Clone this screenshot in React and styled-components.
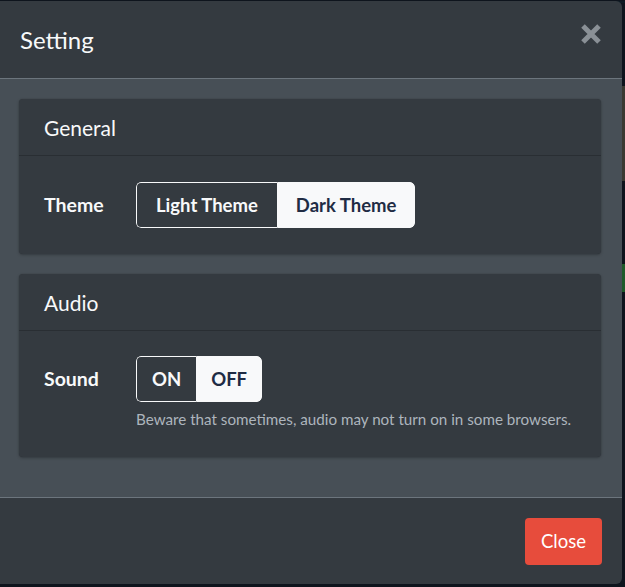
import React, { useState } from "react";
import styled, { createGlobalStyle } from "styled-components";

const GlobalStyle = createGlobalStyle`
  html, body { margin: 0; padding: 0; }
  body {
    background: #0e141d;
    font-family: Lato, "Noto Sans", "Liberation Sans", sans-serif;
    color: #f8f9fa;
    overflow: hidden;
  }
`;

const Backdrop = styled.div`
  position: relative;
  width: 625px;
  height: 587px;
  background: #0e141d;
`;

const Decor = styled.div`
  position: absolute;
  right: 0;
  width: 4px;
  top: ${(p) => p.$top}px;
  height: ${(p) => p.$h}px;
  background: ${(p) => p.$c};
`;

const TopStrip = styled.div`
  position: absolute;
  left: 0;
  top: 0;
  width: 625px;
  height: 2px;
  background: linear-gradient(90deg, #1c3a44, #12323c 40%, #0e1a24);
`;

const Modal = styled.div`
  position: relative;
  margin-top: 1px;
  width: 622px;
  height: 583px;
  background: #343a40;
  border-radius: 0 6px 6px 0;
  display: flex;
  flex-direction: column;
  overflow: hidden;
`;

const Header = styled.div`
  height: 78px;
  flex: none;
  box-sizing: border-box;
  display: flex;
  align-items: center;
  justify-content: space-between;
  padding: 0 19px 0 20px;
  border-bottom: 1px solid #6c757d;
`;

const Title = styled.h4`
  margin: 0;
  font-size: 24px;
  font-weight: 400;
  color: #f8f9fa;
`;

const CloseX = styled.button`
  background: none;
  border: 0;
  padding: 0;
  width: 24px;
  height: 24px;
  margin-top: -11px;
  display: flex;
  align-items: center;
  justify-content: center;
  cursor: pointer;
`;

const Body = styled.div`
  flex: 1;
  background: #474f56;
  padding: 20px 21px 0 19px;
  border-bottom: 1px solid #6c757d;
`;

const Card = styled.div`
  background: #343a40;
  border-radius: 4px;
  box-shadow: 0 0 1px rgba(0, 0, 0, 0.3), 0 1px 3px rgba(0, 0, 0, 0.25);
  margin-bottom: 20px;
`;

const CardHeader = styled.div`
  height: 57px;
  box-sizing: border-box;
  display: flex;
  align-items: center;
  padding: 0 25px;
  border-bottom: 1px solid rgba(0, 0, 0, 0.2);
  font-size: 21px;
  color: #f8f9fa;
`;

const CardBody = styled.div`
  padding: ${(p) => p.$pt}px 25px ${(p) => p.$pb}px;
`;

const Row = styled.div`
  display: grid;
  grid-template-columns: 92px auto;
  align-items: start;
`;

const Label = styled.div`
  font-weight: 700;
  font-size: 19.5px;
  line-height: 46px;
  color: #f8f9fa;
`;

const Control = styled.div`
  display: flex;
  flex-direction: column;
  align-items: flex-start;
`;

const Group = styled.div`
  display: inline-flex;
  border-radius: 5px;
  overflow: hidden;
`;

const Seg = styled.button`
  height: 46px;
  box-sizing: border-box;
  padding: 0 ${(p) => p.$px}px;
  font-family: inherit;
  font-size: 18.5px;
  font-weight: 700;
  border: 1px solid #f8f9fa;
  border-right: ${(p) => (p.$active ? "0" : "1px solid #f8f9fa")};
  background: ${(p) => (p.$active ? "#343a40" : "#f8f9fa")};
  color: ${(p) => (p.$active ? "#f8f9fa" : "#1f2c44")};
  border-radius: ${(p) => (p.$first ? "5px 0 0 5px" : "0 5px 5px 0")};
  cursor: pointer;
`;

const Help = styled.small`
  margin-top: 8px;
  font-size: 15.2px;
  line-height: 18px;
  color: #adb5bd;
`;

const Footer = styled.div`
  height: 86px;
  flex: none;
  box-sizing: border-box;
  display: flex;
  align-items: center;
  justify-content: flex-end;
  padding: 0 20px;
`;

const CloseButton = styled.button`
  height: 47px;
  padding: 0 16px;
  border: 0;
  border-radius: 4px;
  background: #e74c3c;
  color: #fff;
  font-family: inherit;
  font-size: 18.5px;
  cursor: pointer;
`;

export default function App() {
  const [theme, setTheme] = useState("light");
  const [sound, setSound] = useState("on");
  return (
    <>
      <GlobalStyle />
      <Backdrop>
        <TopStrip />
        <Decor $top={85} $h={95} $c="#3a3a32" />
        <Decor $top={263} $h={28} $c="#1f5a2a" />
        <Modal>
          <Header>
            <Title>Setting</Title>
            <CloseX aria-label="Close">
              <svg width="22" height="22" viewBox="0 0 22 22">
                <path
                  d="M3 3 L19 19 M19 3 L3 19"
                  stroke="#8a9096"
                  strokeWidth="5"
                  strokeLinecap="butt"
                />
              </svg>
            </CloseX>
          </Header>
          <Body>
            <Card>
              <CardHeader>General</CardHeader>
              <CardBody $pt={26} $pb={26}>
                <Row>
                  <Label>Theme</Label>
                  <Control>
                    <Group>
                      <Seg $first $px={19} $active={theme === "light"} onClick={() => setTheme("light")}>
                        Light Theme
                      </Seg>
                      <Seg $px={18} $active={theme === "dark"} onClick={() => setTheme("dark")}>
                        Dark Theme
                      </Seg>
                    </Group>
                  </Control>
                </Row>
              </CardBody>
            </Card>
            <Card>
              <CardHeader>Audio</CardHeader>
              <CardBody $pt={25} $pb={29}>
                <Row>
                  <Label>Sound</Label>
                  <Control>
                    <Group>
                      <Seg $first $px={15} $active={sound === "on"} onClick={() => setSound("on")}>
                        ON
                      </Seg>
                      <Seg $px={14} $active={sound === "off"} onClick={() => setSound("off")}>
                        OFF
                      </Seg>
                    </Group>
                    <Help>Beware that sometimes, audio may not turn on in some browsers.</Help>
                  </Control>
                </Row>
              </CardBody>
            </Card>
          </Body>
          <Footer>
            <CloseButton>Close</CloseButton>
          </Footer>
        </Modal>
      </Backdrop>
    </>
  );
}
